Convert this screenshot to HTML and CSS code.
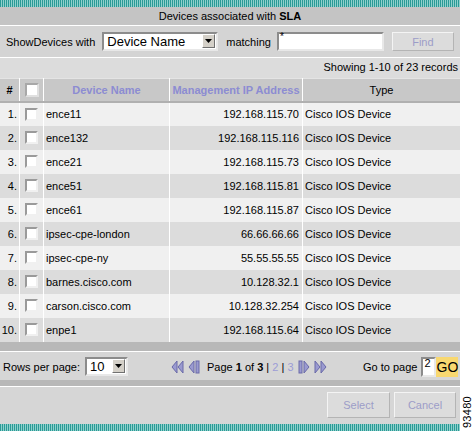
FILE: index.html
```html
<!DOCTYPE html>
<html>
<head>
<meta charset="utf-8">
<link rel="stylesheet" href="styles.css">
</head>
<body>
<div class="page">
  <div class="main">
    <div class="stripe"></div>
    <div class="title">Devices associated with <b>SLA</b></div>
    <div class="filter">
      <span class="lbl">ShowDevices with</span>
      <div class="select big"><span class="val">Device Name</span><span class="arrow"><svg width="7" height="4" viewBox="0 0 7 4"><path d="M0 0H7L3.5 4Z" fill="#000"/></svg></span></div>
      <span class="lbl">matching</span>
      <div class="input wide"><span class="star">*</span></div>
      <div class="btn find">Find</div>
    </div>
    <div class="showing">Showing 1-10 of 23 records</div>
    <table class="grid">
      <thead>
        <tr><th class="c-num">#</th><th class="c-chk"><span class="cb hdr"></span></th><th class="c-name link">Device Name</th><th class="c-ip link">Management IP Address</th><th class="c-type">Type</th></tr>
      </thead>
      <tbody>
        <tr><td class="c-num">1.</td><td class="c-chk"><span class="cb"></span></td><td class="c-name">ence11</td><td class="c-ip">192.168.115.70</td><td class="c-type">Cisco IOS Device</td></tr>
        <tr><td class="c-num">2.</td><td class="c-chk"><span class="cb"></span></td><td class="c-name">ence132</td><td class="c-ip">192.168.115.116</td><td class="c-type">Cisco IOS Device</td></tr>
        <tr><td class="c-num">3.</td><td class="c-chk"><span class="cb"></span></td><td class="c-name">ence21</td><td class="c-ip">192.168.115.73</td><td class="c-type">Cisco IOS Device</td></tr>
        <tr><td class="c-num">4.</td><td class="c-chk"><span class="cb"></span></td><td class="c-name">ence51</td><td class="c-ip">192.168.115.81</td><td class="c-type">Cisco IOS Device</td></tr>
        <tr><td class="c-num">5.</td><td class="c-chk"><span class="cb"></span></td><td class="c-name">ence61</td><td class="c-ip">192.168.115.87</td><td class="c-type">Cisco IOS Device</td></tr>
        <tr><td class="c-num">6.</td><td class="c-chk"><span class="cb"></span></td><td class="c-name">ipsec-cpe-london</td><td class="c-ip">66.66.66.66</td><td class="c-type">Cisco IOS Device</td></tr>
        <tr><td class="c-num">7.</td><td class="c-chk"><span class="cb"></span></td><td class="c-name">ipsec-cpe-ny</td><td class="c-ip">55.55.55.55</td><td class="c-type">Cisco IOS Device</td></tr>
        <tr><td class="c-num">8.</td><td class="c-chk"><span class="cb"></span></td><td class="c-name">barnes.cisco.com</td><td class="c-ip">10.128.32.1</td><td class="c-type">Cisco IOS Device</td></tr>
        <tr><td class="c-num">9.</td><td class="c-chk"><span class="cb"></span></td><td class="c-name">carson.cisco.com</td><td class="c-ip">10.128.32.254</td><td class="c-type">Cisco IOS Device</td></tr>
        <tr><td class="c-num">10.</td><td class="c-chk"><span class="cb"></span></td><td class="c-name">enpe1</td><td class="c-ip">192.168.115.64</td><td class="c-type">Cisco IOS Device</td></tr>
      </tbody>
    </table>
    <div class="bar"></div>
    <div class="pager">
      <div class="rows"><span class="lbl">Rows per page:</span><div class="select small"><span class="val">10</span><span class="arrow"><svg width="7" height="4" viewBox="0 0 7 4"><path d="M0 0H7L3.5 4Z" fill="#000"/></svg></span></div></div>
      <div class="nav">
        <svg class="ico" width="14" height="14" viewBox="0 0 14 14"><path d="M6 1L1 7L6 13V1Z M12 1L7 7L12 13V1Z" fill="#9a9ad0" stroke="#6a6aa8" stroke-width="1"/></svg>
        <svg class="ico" width="14" height="14" viewBox="0 0 14 14"><path d="M7 1L2 7L7 13V1Z" fill="#9a9ad0" stroke="#6a6aa8" stroke-width="1"/><rect x="9" y="1" width="3" height="12" fill="#9a9ad0" stroke="#6a6aa8" stroke-width="1"/></svg>
        <span class="ptext">Page <b>1</b> of <b>3</b> | <span class="pl">2</span> | <span class="pl">3</span></span>
        <svg class="ico" width="14" height="14" viewBox="0 0 14 14"><rect x="2" y="1" width="3" height="12" fill="#9a9ad0" stroke="#6a6aa8" stroke-width="1"/><path d="M7 1L12 7L7 13V1Z" fill="#9a9ad0" stroke="#6a6aa8" stroke-width="1"/></svg>
        <svg class="ico" width="14" height="14" viewBox="0 0 14 14"><path d="M2 1L7 7L2 13V1Z M8 1L13 7L8 13V1Z" fill="#9a9ad0" stroke="#6a6aa8" stroke-width="1"/></svg>
      </div>
      <div class="goto"><span class="lbl">Go to page</span><div class="input pg"><span class="pv">2</span></div><div class="go">GO</div></div>
    </div>
    <div class="bar thin"></div>
    <div class="actions">
      <div class="btn act sel">Select</div>
      <div class="btn act can">Cancel</div>
    </div>
    <div class="stripe"></div>
  </div>
  <div class="side"><span class="fig">93480</span></div>
</div>
</body>
</html>
```
FILE: styles.css
```css
html, body { margin: 0; padding: 0; background: #fff; }
body { font-family: "Liberation Sans", Arial, sans-serif; font-size: 11px; color: #000; }
.page { display: flex; width: 473px; height: 431px; }
.main { width: 460px; display: flex; flex-direction: column; background: #d6d6d6; }
.side { flex: 1; display: flex; align-items: flex-end; justify-content: center; padding-bottom: 3px; }
.fig { writing-mode: vertical-rl; transform: rotate(180deg); font-size: 11px; letter-spacing: 0.3px; }
.stripe { height: 7px; background: repeating-linear-gradient(90deg, #2a9a96 0 1px, #8fd0cc 1px 2px); }
.title { height: 18px; line-height: 19px; text-align: center; background: #c4c4c4; border-bottom: 1px solid #fff; font-size: 11px; }
.filter { height: 31px; display: flex; align-items: center; padding: 0 4px 0 6px; background: #d4d4d4; border-bottom: 1px solid #fff; }
.lbl { font-size: 11px; }
.select { display: flex; align-items: stretch; background: #fff; border: 2px solid; border-color: #8c8c8c #e8e8e8 #e8e8e8 #8c8c8c; box-sizing: border-box; }
.select .val { flex: 1; padding-left: 3px; }
.select.big { width: 116px; height: 19px; margin-left: 7px; margin-right: 8px; font-size: 13px; line-height: 15px; }
.select .arrow { width: 13px; margin: 0 1px 1px 0; display: flex; align-items: center; justify-content: center; background: #d4d0c8; border: 1px solid; border-color: #fff #707070 #707070 #fff; box-sizing: border-box; }
.input { background: #fff; border: 2px solid; border-color: #8c8c8c #e8e8e8 #e8e8e8 #8c8c8c; box-sizing: border-box; position: relative; }
.input.wide { width: 107px; height: 19px; margin-left: 6px; }
.star { position: absolute; left: 1px; top: -3px; font-size: 10px; }
.btn { box-sizing: border-box; display: flex; align-items: center; justify-content: center; background: #dcdcdc; border: 1px solid; border-color: #f4f4f4 #b4b4b4 #b4b4b4 #f4f4f4; color: #9c9cc8; font-size: 11px; }
.find { width: 62px; height: 19px; margin-left: 8px; }
.showing { height: 20px; line-height: 19px; text-align: right; padding-right: 2px; background: #dcdcdc; font-size: 11px; }
.grid { width: 460px; border-collapse: collapse; table-layout: fixed; }
.grid th, .grid td { padding: 0; border-left: 1px solid #fff; white-space: nowrap; overflow: hidden; }
.grid th:first-child, .grid td:first-child { border-left: 0; }
.grid thead tr { height: 23px; background: #c8c8c8; border-top: 1px solid #e4e4e4; border-bottom: 2px solid #b0b0b0; }
.grid th { font-weight: normal; font-size: 11px; }
.grid th.c-num { font-weight: bold; }
.grid th.link { color: #8c8cd2; font-weight: bold; }
.grid tbody tr { height: 24px; }
.grid tbody tr:nth-child(odd) { background: #f0f0f0; }
.grid tbody tr:nth-child(even) { background: #dcdcdc; }
.c-num { width: 19px; text-align: right; padding-right: 2px !important; }
.c-chk { width: 23px; }
.c-name { width: 125px; padding-left: 2px !important; }
.c-ip { width: 132px; text-align: right; padding-right: 3px !important; }
.c-type { padding-left: 2px !important; }
th.c-name, th.c-type, th.c-ip { text-align: center; padding: 0 !important; }
th.c-num { text-align: center; padding: 0 !important; }
.cb { display: block; width: 13px; height: 13px; margin-left: 5px; box-sizing: border-box; background: #fff; border: 2px solid; border-color: #9a9a9a #f0f0f0 #f0f0f0 #9a9a9a; }
.cb.hdr { width: 14px; height: 14px; border-color: #a8a8a8 #e0e0e0 #e0e0e0 #a8a8a8; }
.bar { height: 9px; background: #b8b8b8; border-bottom: 1px solid #fff; }
.bar.thin { height: 6px; }
.pager { height: 28px; box-sizing: border-box; padding-top: 2px; display: flex; align-items: center; background: #d6d6d6; padding-left: 3px; }
.rows { display: flex; align-items: center; width: 168px; }
.select.small { width: 43px; height: 19px; margin-left: 5px; font-size: 13px; line-height: 15px; }
.nav { display: flex; align-items: center; width: 192px; }
.ico { margin-right: 2px; }
.ptext { margin: 0 3px 0 4px; font-size: 11px; }
.pl { color: #9c9cd6; }
.goto { display: flex; align-items: center; }
.input.pg { width: 15px; height: 20px; margin-left: 4px; }
.pv { position: absolute; left: 1px; top: -2px; font-size: 11px; }
.go { width: 22px; height: 20px; display: flex; align-items: center; justify-content: center; background: #f8d870; font-size: 14px; }
.actions { flex: 1; display: flex; justify-content: flex-end; align-items: center; padding-right: 4px; gap: 4px; background: #d6d6d6; }
.act { height: 26px; }
.sel { width: 63px; }
.can { width: 62px; }
```
